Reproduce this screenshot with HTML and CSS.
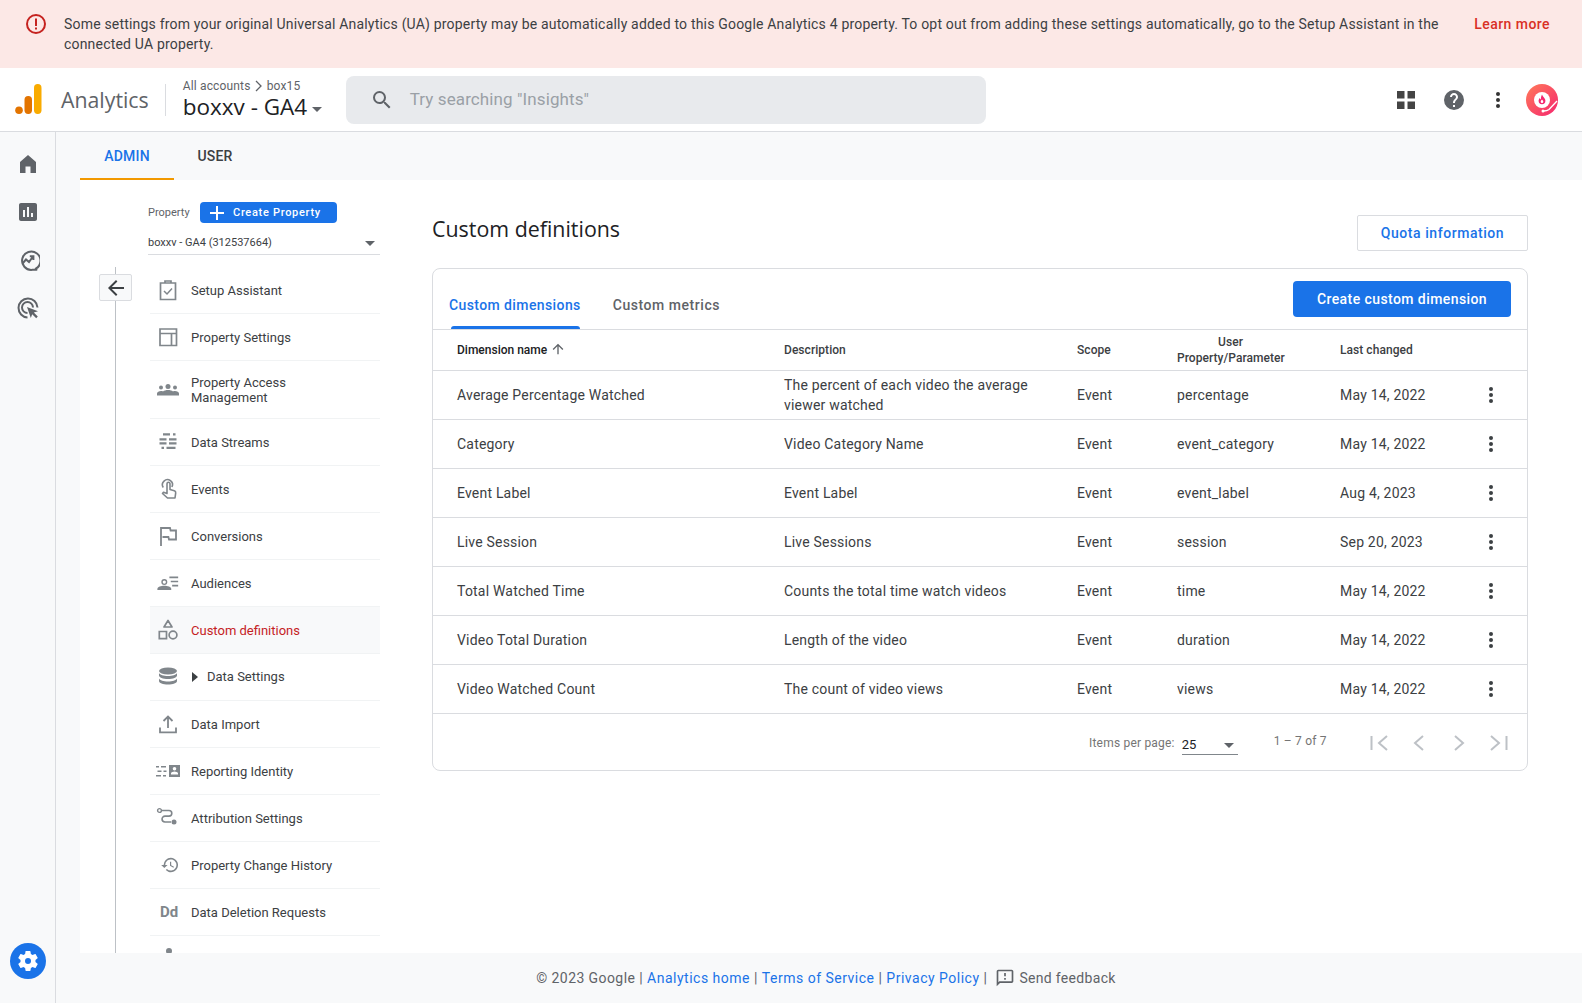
FILE: index.html
```html
<!DOCTYPE html>
<html lang="en">

<head>
  <meta charset="UTF-8" />
  <title>Custom definitions - Analytics</title>
  <link rel="stylesheet" href="styles.css">
</head>

<body>
  <!-- Top banner -->
  <div class="banner">
    <svg class="banner-icon" viewBox="0 0 24 24" width="24" height="24"><circle cx="12" cy="12" r="9" fill="none" stroke="#c5221f" stroke-width="2"/><path d="M11 6.500h2v7.500h-2zM11 15.500h2v2h-2z" fill="#c5221f"/></svg>
    <p class="banner-text">Some settings from your original Universal Analytics (UA) property may be automatically added to this Google Analytics 4 property. To opt out from adding these settings automatically, go to the Setup Assistant in the connected UA property.</p>
    <a class="banner-link">Learn more</a>
  </div>

  <!-- Header -->
  <header class="topbar">
    <svg class="logo" viewBox="0 0 28 32" width="28" height="32"><rect x="19" y="1" width="7.500" height="30" rx="3.700" fill="#f9ab00"/><rect x="9.500" y="13" width="7.500" height="18" rx="3.700" fill="#e37400"/><circle cx="4" cy="27.200" r="3.800" fill="#e37400"/></svg>
    <span class="brand">Analytics</span>
    <div class="crumbs">
      <div class="crumb-line">All accounts
        <svg viewBox="0 0 10 12" width="10" height="12"><path d="M2 1l5 5-5 5" fill="none" stroke="#5f6368" stroke-width="1.300"/></svg>
        box15</div>
      <div class="crumb-title">boxxv - GA4<span class="caret"></span></div>
    </div>
    <div class="search">
      <svg viewBox="0 0 24 24" width="24" height="24"><path d="M15.500 14h-.79l-.28-.27A6.470 6.470 0 0 0 16 9.500 6.500 6.500 0 1 0 9.500 16c1.610 0 3.090-.59 4.230-1.570l.27.28v.79l5 4.990L20.490 19l-4.990-5zm-6 0C7.010 14 5 11.990 5 9.500S7.010 5 9.500 5 14 7.010 14 9.500 11.990 14 9.500 14z" fill="#5f6368"/></svg>
      <span>Try searching "Insights"</span>
    </div>
    <div class="top-actions">
      <svg viewBox="0 0 18 18" width="18" height="18"><path d="M0 0h7.500v7.500H0zM10.500 0H18v7.500h-7.500zM0 10.500h7.500V18H0zM10.500 10.500H18V18h-7.500z" fill="#444"/></svg>
      <svg viewBox="0 0 24 24" width="24" height="24"><path d="M12 2a10 10 0 1 0 0 20 10 10 0 0 0 0-20zm1 17h-2v-2h2v2zm2.070-7.750l-.9.920C13.450 12.900 13 13.500 13 15h-2v-.5c0-1.100.45-2.100 1.170-2.830l1.240-1.260c.37-.36.590-.86.590-1.410 0-1.100-.9-2-2-2s-2 .9-2 2H8c0-2.210 1.790-4 4-4s4 1.790 4 4c0 .88-.36 1.680-.93 2.250z" fill="#5f6368"/></svg>
      <svg viewBox="0 0 6 20" width="6" height="20"><circle cx="3" cy="4" r="2" fill="#333"/><circle cx="3" cy="10" r="2" fill="#333"/><circle cx="3" cy="16" r="2" fill="#333"/></svg>
      <svg class="avatar" viewBox="0 0 32 32" width="32" height="32">
        <defs><linearGradient id="avatarGrad" x1="0" y1="0" x2="1" y2="1"><stop offset="0" stop-color="#ff7a59"/><stop offset="1" stop-color="#f5266f"/></linearGradient></defs>
        <circle cx="16" cy="16" r="16" fill="url(#avatarGrad)"/>
        <circle cx="16" cy="16" r="8" fill="#fff"/>
        <path d="M16 10.500c.6 2.400 3.400 3.400 3.400 6.300a3.400 3.400 0 0 1-6.800 0c0-1.300.6-2.100 1.300-2.800.2 1 .7 1.400 1.100 1.500-.2-1.800.2-3.500 1-5z" fill="#f5266f"/>
        <path d="M16 15.500c.5.800 1.300 1.300 1.300 2.200a1.300 1.300 0 0 1-2.600 0c0-.9.800-1.400 1.300-2.200z" fill="#fff"/>
        <path d="M31 17l-8 8.500c-1.500 1.200-3.500 1.500-5.500 1.500" fill="none" stroke="#fff" stroke-width="1.300"/>
        <circle cx="17" cy="27" r="1.500" fill="#fff"/>
      </svg>
    </div>
  </header>

  <div class="shell">
    <!-- Left rail -->
    <aside class="rail">
      <svg viewBox="0 0 24 24" width="24" height="24"><path d="M4 21V10l8-7 8 7v11h-5.500v-6.500h-5V21z" fill="#5f6368"/></svg>
      <svg viewBox="0 0 24 24" width="24" height="24"><path d="M19 3H5c-1.100 0-2 .9-2 2v14c0 1.100.9 2 2 2h14c1.100 0 2-.9 2-2V5c0-1.100-.9-2-2-2zM9 17H7v-7h2v7zm4 0h-2V7h2v10zm4 0h-2v-4h2v4z" fill="#5f6368"/></svg>
      <svg viewBox="0 0 24 24" width="24" height="24"><path d="M19.800 20.700a9.200 9.200 0 1 0-3.300 1.100h4z" fill="none" stroke="#5f6368" stroke-width="2" stroke-linejoin="round"/><path d="M6.500 15.500l3.500-4 3 2.500 4-5.500M13.800 8.300h3.600v3.600" fill="none" stroke="#5f6368" stroke-width="2"/></svg>
      <svg viewBox="0 0 24 24" width="24" height="24"><path d="M11.500 21.500a9.500 9.500 0 1 1 10-10" fill="none" stroke="#5f6368" stroke-width="2"/><path d="M11.500 17a5.500 5.500 0 1 1 5.500-5.500" fill="none" stroke="#5f6368" stroke-width="2"/><path d="M11 11l11 4.200-4.200 1.400 4 4-1.600 1.600-4-4L14.800 22z" fill="#5f6368"/></svg>
      <div class="rail-gear">
        <svg viewBox="0 0 24 24" width="24" height="24"><path d="M19.430 12.980c.04-.32.070-.64.070-.98s-.03-.66-.07-.98l2.110-1.650c.19-.15.24-.42.120-.64l-2-3.460c-.12-.22-.39-.3-.61-.22l-2.490 1c-.52-.4-1.080-.73-1.690-.98l-.38-2.650A.488.488 0 0 0 14 2h-4c-.25 0-.46.18-.49.42l-.38 2.650c-.61.25-1.170.59-1.690.98l-2.490-1c-.23-.09-.49 0-.61.22l-2 3.460c-.13.22-.07.49.12.64l2.110 1.650c-.04.32-.07.65-.07.98s.03.66.07.98l-2.110 1.650c-.19.15-.24.42-.12.64l2 3.460c.12.22.39.3.61.22l2.490-1c.52.4 1.080.73 1.690.98l.38 2.650c.03.24.24.42.49.42h4c.25 0 .46-.18.49-.42l.38-2.650c.61-.25 1.170-.59 1.690-.98l2.490 1c.23.09.49 0 .61-.22l2-3.460c.12-.22.07-.49-.12-.64l-2.110-1.650zM12 15a3 3 0 1 1 0-6 3 3 0 0 1 0 6z" fill="#fff"/></svg>
      </div>
    </aside>

    <div class="main">
      <nav class="page-tabs">
        <a class="page-tab active">ADMIN</a>
        <a class="page-tab">USER</a>
      </nav>

      <div class="panel">
        <!-- Property column -->
        <div class="side">
          <div class="side-top">
            <div class="prop-line">
              <span class="prop-label">Property</span>
              <button class="prop-create">
                <svg viewBox="0 0 14 14" width="14" height="14"><path d="M6 0h2v6h6v2H8v6H6V8H0V6h6z" fill="#fff"/></svg>
                Create Property
              </button>
            </div>
            <div class="prop-select">boxxv - GA4 (312537664)<span class="caret small"></span></div>
          </div>

          <div class="side-body">
            <button class="back-btn">
              <svg viewBox="0 0 24 24" width="24" height="24"><path d="M20 11H7.830l5.590-5.590L12 4l-8 8 8 8 1.410-1.410L7.830 13H20z" fill="#3c4043"/></svg>
            </button>
            <ul class="side-nav">
              <li>
                <svg viewBox="0 0 24 24"><path d="M4.500 5h15v16.500h-15zM9 5V3h6v2" fill="none" stroke="#80868b" stroke-width="1.700"/><path d="M8 13l3 3 5-5.500" fill="none" stroke="#80868b" stroke-width="1.500"/></svg>
                <span>Setup Assistant</span>
              </li>
              <li>
                <svg viewBox="0 0 24 24"><path d="M4 4h16.500v16.500H4zM4 8.500h16.500M15.500 8.500v12" fill="none" stroke="#80868b" stroke-width="1.700"/></svg>
                <span>Property Settings</span>
              </li>
              <li class="tall">
                <svg viewBox="0 0 24 24"><circle cx="12" cy="8.500" r="2.500" fill="#80868b"/><circle cx="5" cy="9.500" r="2" fill="#80868b"/><circle cx="19" cy="9.500" r="2" fill="#80868b"/><path d="M1 17.500v-2c0-1.500 2-2.500 4-2.500 1 0 1.500.1 2 .4 1-.8 3-1.400 5-1.400s4 .6 5 1.400c.5-.3 1-.4 2-.4 2 0 4 1 4 2.500v2z" fill="#80868b"/></svg>
                <span>Property Access Management</span>
              </li>
              <li>
                <svg viewBox="0 0 24 24"><path d="M7 3.200h7v2.300H7zM17 3.200h2.500v2.300H17zM3.500 8.200h7v2.300h-7zM13 8.200h7.500v2.300H13zM3.500 12.200h7v2.300h-7zM13 12.200h7.500v2.300H13zM5.500 16.800h2.500v2.300H5.500zM10.500 16.800h9v2.300h-9z" fill="#80868b"/></svg>
                <span>Data Streams</span>
              </li>
              <li>
                <svg viewBox="0 0 24 24"><path d="M7.300 10.500a5 5 0 1 1 8.600-.5M11 12V6.800a1.500 1.500 0 0 1 3 0v5.700l4.300 1.300c1 .3 1.500 1 1.400 2l-.7 5.200H11.500l-5-4.500 1-1.300 3.500 1.300z" fill="none" stroke="#80868b" stroke-width="1.600" stroke-linejoin="round"/></svg>
                <span>Events</span>
              </li>
              <li>
                <svg viewBox="0 0 24 24"><path d="M5 22V4h9l.6 2.500H20v9h-7l-.6-2.500H6.500" fill="none" stroke="#80868b" stroke-width="1.800"/></svg>
                <span>Conversions</span>
              </li>
              <li>
                <svg viewBox="-1.500 -1 26 26"><circle cx="7.500" cy="11" r="2.500" fill="none" stroke="#80868b" stroke-width="1.500"/><path d="M0 19.500v-1.200c0-2 4-3.300 7.500-3.300s7.500 1.300 7.500 3.300v1.200z" fill="#80868b"/><path d="M13 5h9.500v1.800H13zM14.500 9.500h8v1.800h-8zM16 14h6.500v1.800H16z" fill="#80868b"/></svg>
                <span>Audiences</span>
              </li>
              <li class="current">
                <svg viewBox="0 0 24 24"><path d="M12 2.500l4 6.500H8z" fill="none" stroke="#80868b" stroke-width="1.700" stroke-linejoin="round"/><path d="M3.300 13.500h7.200v7.200H3.300z" fill="none" stroke="#80868b" stroke-width="1.700"/><circle cx="17" cy="17" r="3.900" fill="none" stroke="#80868b" stroke-width="1.700"/></svg>
                <span>Custom definitions</span>
              </li>
              <li class="expand">
                <svg viewBox="0 0 24 24"><ellipse cx="12" cy="6" rx="9" ry="3.500" fill="#80868b"/><path d="M3 8v2.500C3 12.400 7 14 12 14s9-1.600 9-3.500V8c-1 2-4.500 3-9 3S4 10 3 8zM3 13.500V16c0 2 4 3.500 9 3.500s9-1.500 9-3.500v-2.500c-1 2-4.500 3-9 3s-8-1-9-3z" fill="#80868b"/></svg>
                <i class="tri"></i>
                <span>Data Settings</span>
              </li>
              <li>
                <svg viewBox="0 0 24 24"><path d="M4 15.500v4.800h16v-4.800M12 16V5M7.500 9L12 4.500 16.500 9" fill="none" stroke="#80868b" stroke-width="1.800"/></svg>
                <span>Data Import</span>
              </li>
              <li>
                <svg viewBox="0 0 24 24"><path d="M0 7h3v1.500H0zM5 7h5v1.500H5zM1.500 11.500h4v1.500h-4zM7.500 11.500h3v1.500h-3zM0 16h5v1.500H0zM7 16h3v1.500H7z" fill="#80868b"/><path d="M13 6h11v12H13zM18.500 8a1.800 1.800 0 1 0 0 3.600 1.800 1.800 0 0 0 0-3.600zM15 15.500h7v-1.200c0-1-2.300-1.800-3.500-1.800s-3.500.8-3.500 1.800z" fill="#80868b" fill-rule="evenodd"/></svg>
                <span>Reporting Identity</span>
              </li>
              <li>
                <svg viewBox="0 0 24 24"><circle cx="3.500" cy="4.500" r="1.900" fill="none" stroke="#80868b" stroke-width="1.400"/><path d="M5.500 4.500h7.500a2.800 2.800 0 0 1 0 5.600H9a2.800 2.800 0 0 0 0 5.900h6" fill="none" stroke="#80868b" stroke-width="1.600"/><circle cx="18" cy="16" r="2.500" fill="#80868b"/></svg>
                <span>Attribution Settings</span>
              </li>
              <li>
                <svg viewBox="-5.500 -3 30 30"><path d="M13 3a9 9 0 0 0-9 9H1l3.900 3.900L9 12H6a7 7 0 1 1 2.100 5L6.700 18.400A9 9 0 1 0 13 3zm-1 5v5l4.300 2.500.7-1.200-3.500-2.100V8z" fill="#80868b"/></svg>
                <span>Property Change History</span>
              </li>
              <li>
                <b class="dd">Dd</b>
                <span>Data Deletion Requests</span>
              </li>
              <li class="cut">
                <i class="dot"></i>
              </li>
            </ul>
          </div>
        </div>

        <!-- Custom definitions content -->
        <section class="content">
          <div class="content-head">
            <h1>Custom definitions</h1>
            <button class="btn-outline">Quota information</button>
          </div>

          <div class="card">
            <div class="card-tabs">
              <a class="card-tab active">Custom dimensions</a>
              <a class="card-tab wide-text">Custom metrics</a>
              <button class="btn-primary">Create custom dimension</button>
            </div>

            <table class="defs">
              <thead>
                <tr>
                  <th class="c-name">Dimension name
                    <svg viewBox="0 0 24 24" width="16" height="16"><path d="M20 12l-1.410-1.410L13 16.170V4h-2v12.170l-5.580-5.590L4 12l8 8 8-8z" transform="rotate(180 12 12)" fill="#5f6368"/></svg>
                  </th>
                  <th class="c-desc">Description</th>
                  <th class="c-scope">Scope</th>
                  <th class="c-param">User<br>Property/Parameter</th>
                  <th class="c-date">Last changed</th>
                  <th class="c-more"></th>
                </tr>
              </thead>
              <tbody>
                <tr>
                  <td>Average Percentage Watched</td>
                  <td>The percent of each video the average viewer watched</td>
                  <td>Event</td>
                  <td>percentage</td>
                  <td>May 14, 2022</td>
                  <td class="more"><i></i><i></i><i></i></td>
                </tr>
                <tr>
                  <td>Category</td>
                  <td>Video Category Name</td>
                  <td>Event</td>
                  <td>event_category</td>
                  <td>May 14, 2022</td>
                  <td class="more"><i></i><i></i><i></i></td>
                </tr>
                <tr>
                  <td>Event Label</td>
                  <td>Event Label</td>
                  <td>Event</td>
                  <td>event_label</td>
                  <td>Aug 4, 2023</td>
                  <td class="more"><i></i><i></i><i></i></td>
                </tr>
                <tr>
                  <td>Live Session</td>
                  <td>Live Sessions</td>
                  <td>Event</td>
                  <td>session</td>
                  <td>Sep 20, 2023</td>
                  <td class="more"><i></i><i></i><i></i></td>
                </tr>
                <tr>
                  <td>Total Watched Time</td>
                  <td>Counts the total time watch videos</td>
                  <td>Event</td>
                  <td>time</td>
                  <td>May 14, 2022</td>
                  <td class="more"><i></i><i></i><i></i></td>
                </tr>
                <tr>
                  <td>Video Total Duration</td>
                  <td>Length of the video</td>
                  <td>Event</td>
                  <td>duration</td>
                  <td>May 14, 2022</td>
                  <td class="more"><i></i><i></i><i></i></td>
                </tr>
                <tr>
                  <td>Video Watched Count</td>
                  <td>The count of video views</td>
                  <td>Event</td>
                  <td>views</td>
                  <td>May 14, 2022</td>
                  <td class="more"><i></i><i></i><i></i></td>
                </tr>
              </tbody>
            </table>

            <div class="pager">
              <span class="pager-label">Items per page:</span>
              <div class="pager-select">25<span class="caret small"></span></div>
              <span class="pager-range">1 – 7 of 7</span>
              <div class="pager-btns">
                <svg viewBox="0 0 24 24" width="24" height="24"><path d="M4.500 5v14M20 5l-8 7 8 7" fill="none" stroke="#bdc1c6" stroke-width="2"/></svg>
                <svg viewBox="0 0 24 24" width="24" height="24"><path d="M16 5l-8 7 8 7" fill="none" stroke="#bdc1c6" stroke-width="2"/></svg>
                <svg viewBox="0 0 24 24" width="24" height="24"><path d="M8 5l8 7-8 7" fill="none" stroke="#bdc1c6" stroke-width="2"/></svg>
                <svg viewBox="0 0 24 24" width="24" height="24"><path d="M4 5l8 7-8 7M19.500 5v14" fill="none" stroke="#bdc1c6" stroke-width="2"/></svg>
              </div>
            </div>
          </div>
        </section>
      </div>

      <footer class="foot">
        <span>© 2023 Google |</span>
        <a>Analytics home</a><span>|</span>
        <a>Terms of Service</a><span>|</span>
        <a>Privacy Policy</a><span>|</span>
        <svg viewBox="0 0 24 24" width="20" height="20"><path d="M20 2H4c-1.100 0-2 .9-2 2v18l4-4h14c1.100 0 2-.9 2-2V4c0-1.100-.9-2-2-2zm0 14H5.200L4 17.200V4h16v12zM11 12h2v2h-2zM11 6h2v4h-2z" fill="#5f6368"/></svg>
        <span class="feedback">Send feedback</span>
      </footer>
    </div>
  </div>
</body>

</html>
```

FILE: styles.css
```css
* {
  box-sizing: border-box;
}

html,
body {
  height: 100%;
}

body {
  margin: 0;
  display: flex;
  flex-direction: column;
  overflow: hidden;
  font-family: Roboto, sans-serif;
  font-size: 14px;
  color: #3c4043;
  background: #f8f9fa;
}

/* banner */
.banner {
  height: 68px;
  flex: none;
  display: flex;
  align-items: flex-start;
  background: #fce8e6;
  padding: 14px 32px 0 24px;
}

.banner-icon {
  flex: none;
  margin-right: 16px;
  margin-top: -2px;
}

.banner-text {
  flex: 1;
  margin: 0;
  font-size: 14px;
  line-height: 20px;
  letter-spacing: 0.19px;
  color: #3c4043;
}

.banner-link {
  flex: none;
  margin-left: 32px;
  margin-top: 2px;
  color: #d93025;
  font-weight: 500;
  letter-spacing: 0.45px;
}

/* header */
.topbar {
  height: 64px;
  flex: none;
  display: flex;
  align-items: center;
  background: #fff;
  border-bottom: 1px solid #dadce0;
  padding: 0 24px 0 15px;
}

.logo {
  flex: none;
  margin-top: -1px;
}

.brand {
  margin-left: 18px;
  padding-right: 16px;
  font-family: "Open Sans", sans-serif;
  font-size: 21.3px;
  color: #5f6368;
  line-height: 32px;
}

.crumbs {
  border-left: 1px solid #dadce0;
  padding-left: 17px;
  height: 32px;
  width: 181px;
  flex: none;
  position: relative;
}

.crumb-line {
  position: absolute;
  top: -6px;
  font-size: 12px;
  line-height: 16px;
  letter-spacing: 0.15px;
  color: #5f6368;
  white-space: nowrap;
}

.crumb-line svg {
  vertical-align: -2px;
}

.crumb-title {
  position: absolute;
  top: 9px;
  font-family: "Open Sans", sans-serif;
  font-size: 22.5px;
  line-height: 28px;
  color: #202124;
  white-space: nowrap;
}

.caret {
  display: inline-block;
  margin-left: 5px;
  vertical-align: 3px;
  border: 5.500px solid transparent;
  border-top: 5.500px solid #5f6368;
  border-bottom: 0;
}

.caret.small {
  border-width: 5px 5px 0;
  margin: 0;
  vertical-align: 2px;
}

.search {
  width: 640px;
  height: 48px;
  flex: none;
  display: flex;
  align-items: center;
  gap: 16px;
  background: #e8eaed;
  border-radius: 8px;
  padding-left: 24px;
  font-size: 17px;
  letter-spacing: 0.1px;
  color: #9aa0a6;
}

.search span {
  margin-top: -2px;
}

.top-actions {
  margin-left: auto;
  display: flex;
  align-items: center;
}

.top-actions svg:nth-child(1) {
  margin-right: 27px;
}

.top-actions svg:nth-child(2) {
  margin-right: 29px;
}

.top-actions svg:nth-child(3) {
  margin-right: 25px;
}

/* shell */
.shell {
  flex: 1;
  min-height: 0;
  display: flex;
}

.rail {
  width: 56px;
  flex: none;
  display: flex;
  flex-direction: column;
  align-items: center;
  gap: 24px;
  padding-top: 20px;
  padding-bottom: 24px;
  border-right: 1px solid #dadce0;
}

.rail-gear {
  margin-top: auto;
  width: 36px;
  height: 36px;
  border-radius: 50%;
  background: #1a73e8;
  display: flex;
  align-items: center;
  justify-content: center;
}

.main {
  flex: 1;
  min-width: 0;
  display: flex;
  flex-direction: column;
}

.page-tabs {
  height: 48px;
  flex: none;
  display: flex;
  padding-left: 24px;
}

.page-tab {
  width: 94px;
  height: 48px;
  line-height: 49px;
  text-align: center;
  font-weight: 500;
  font-size: 14px;
  letter-spacing: 0.2px;
  color: #3c4043;
}

.page-tab + .page-tab {
  width: 82px;
}

.page-tab.active {
  color: #1a73e8;
  border-bottom: 2px solid #f29900;
}

.panel {
  flex: 1;
  min-height: 0;
  margin-left: 24px;
  background: #fff;
  display: flex;
  overflow: hidden;
}

/* property column */
.side {
  width: 352px;
  flex: none;
  padding-top: 22px;
}

.side-top {
  margin-left: 68px;
  width: 232px;
  margin-bottom: 12px;
}

.prop-line {
  display: flex;
  align-items: center;
  height: 21px;
}

.prop-label {
  font-size: 11px;
  color: #5f6368;
  width: 52px;
}

.prop-create {
  width: 137px;
  height: 21px;
  border: 0;
  border-radius: 4px;
  background: #1a73e8;
  color: #fff;
  font-family: Roboto, sans-serif;
  font-size: 11px;
  font-weight: 500;
  letter-spacing: 0.7px;
  display: flex;
  align-items: center;
  gap: 9px;
  padding: 0 0 0 10px;
}

.prop-select {
  height: 32px;
  padding-top: 12px;
  font-size: 11px;
  line-height: 16px;
  color: #3c4043;
  border-bottom: 1px solid #dadce0;
  display: flex;
  justify-content: space-between;
  padding-right: 5px;
}

.prop-select .caret {
  margin-top: 6px;
}

.side-body {
  position: relative;
  display: flex;
  height: 800px;
}

.side-body::before {
  content: "";
  position: absolute;
  left: 35px;
  top: 0;
  bottom: 0;
  width: 1px;
  background: #bdc1c6;
}

.back-btn {
  position: absolute;
  left: 19px;
  top: 7px;
  width: 33px;
  height: 27px;
  padding: 0;
  background: #f8f9fa;
  border: 1px solid #dadce0;
  border-radius: 2px;
  display: flex;
  align-items: center;
  justify-content: center;
}

.side-nav {
  list-style: none;
  margin: 0 0 0 70px;
  padding: 0;
  width: 230px;
}

.side-nav li {
  height: 47px;
  display: flex;
  align-items: center;
  padding-left: 6px;
  border-bottom: 1px solid #f1f3f4;
  font-size: 13px;
  line-height: 15px;
  color: #3c4043;
}

.side-nav li svg {
  width: 24px;
  height: 24px;
  flex: none;
  margin-right: 11px;
}

.side-nav li.tall {
  height: 58px;
}

.side-nav li.tall span {
  width: 130px;
  margin-top: 1px;
}

.side-nav li.current {
  background: #f8f9fa;
  color: #c5221f;
}

.side-nav li.expand svg {
  margin-right: 12px;
}

.side-nav li.expand span {
  margin-top: -1px;
}

.tri {
  border-left: 6px solid #3c4043;
  border-top: 5px solid transparent;
  border-bottom: 5px solid transparent;
  margin-right: 9px;
}

.dd {
  width: 24px;
  margin-right: 11px;
  padding-left: 2px;
  text-align: center;
  font-size: 15px;
  color: #80868b;
}

.side-nav li.cut {
  border: 0;
  align-items: flex-start;
  padding: 12px 0 0 16px;
}

.dot {
  width: 6px;
  height: 6px;
  border-radius: 50%;
  background: #80868b;
}

/* content */
.content {
  width: 1096px;
  flex: none;
}

.content-head {
  display: flex;
  justify-content: space-between;
  align-items: center;
  height: 88px;
  padding-top: 16px;
}

.content-head h1 {
  margin: 0 0 7px;
  font-family: "Open Sans", sans-serif;
  font-size: 21.4px;
  font-weight: 400;
  color: #202124;
}

.btn-outline {
  width: 171px;
  height: 36px;
  background: #fff;
  border: 1px solid #dadce0;
  border-radius: 2px;
  color: #1a73e8;
  font-family: Roboto, sans-serif;
  font-size: 14px;
  font-weight: 500;
  letter-spacing: 0.55px;
  margin-top: 2px;
}

.card {
  border: 1px solid #dadce0;
  border-radius: 8px;
  background: #fff;
}

.card-tabs {
  height: 61px;
  display: flex;
  align-items: flex-end;
  padding: 0 16px 0 16px;
  border-bottom: 1px solid #dadce0;
}

.card-tab {
  position: relative;
  height: 60px;
  padding-top: 28px;
  margin-right: 32px;
  font-size: 14px;
  font-weight: 500;
  letter-spacing: 0.4px;
  color: #5f6368;
  white-space: nowrap;
}

.card-tab.wide-text {
  letter-spacing: 0.55px;
}

.card-tab.active {
  color: #1a73e8;
}

.card-tab.active::after {
  content: "";
  position: absolute;
  left: 2px;
  right: 1px;
  bottom: 0;
  height: 3px;
  border-radius: 3px 3px 0 0;
  background: #1a73e8;
}

.btn-primary {
  margin-left: auto;
  align-self: flex-start;
  margin-top: 12px;
  width: 218px;
  height: 36px;
  border: 0;
  border-radius: 4px;
  background: #1a73e8;
  color: #fff;
  font-family: Roboto, sans-serif;
  font-size: 14px;
  font-weight: 500;
  letter-spacing: 0.42px;
}

.defs {
  width: 100%;
  table-layout: fixed;
  border-collapse: collapse;
}

.defs th {
  height: 40px;
  padding: 0;
  font-size: 12px;
  line-height: 16px;
  font-weight: 500;
  text-align: left;
  color: #3c4043;
  border-bottom: 1px solid #dadce0;
  letter-spacing: 0.05px;
}

.defs th svg {
  vertical-align: -3px;
}

.defs td {
  height: 49px;
  padding: 0;
  font-size: 14px;
  line-height: 20px;
  letter-spacing: 0.2px;
  color: #3c4043;
  border-bottom: 1px solid #dadce0;
}

.defs th:first-child,
.defs td:first-child {
  padding-left: 24px;
}

.defs td:nth-child(2) {
  padding-right: 30px;
}

.defs th.c-name {
  width: 351px;
  color: #202124;
  letter-spacing: 0;
}

.c-desc {
  width: 293px;
}

.c-scope {
  width: 100px;
}

.c-param {
  width: 163px;
}

.defs th.c-param {
  text-align: center;
  padding-right: 56px;
}

.c-date {
  width: 132px;
}

.more i {
  display: block;
  width: 4px;
  height: 4px;
  margin: 2px 0 2px 17px;
  border-radius: 50%;
  background: #3c4043;
}

.pager {
  height: 56px;
  display: flex;
  align-items: center;
  padding-top: 2px;
  font-size: 12px;
  color: #757575;
}

.pager-label {
  margin-left: 656px;
  letter-spacing: 0.2px;
}

.pager-select {
  width: 56px;
  height: 24px;
  margin-left: 7px;
  padding-top: 6px;
  font-size: 13px;
  color: #202124;
  border-bottom: 1px solid #80868b;
  display: flex;
  justify-content: space-between;
  padding-right: 2px;
}

.pager-select .caret {
  margin-top: 6px;
  margin-right: 2px;
}

.pager-range {
  margin-left: 36px;
  margin-top: -3px;
  letter-spacing: 0.2px;
}

.pager-btns {
  margin-left: 40px;
  display: flex;
  gap: 16px;
}

/* footer */
.foot {
  flex: none;
  height: 50px;
  display: flex;
  align-items: center;
  justify-content: center;
  gap: 4px;
  padding-left: 14px;
  font-size: 14px;
  letter-spacing: 0.42px;
  color: #5f6368;
}

.foot a {
  color: #1a73e8;
  letter-spacing: 0.5px;
}

.foot svg {
  margin-left: 4px;
}

.foot .feedback {
  letter-spacing: 0.32px;
}
```
